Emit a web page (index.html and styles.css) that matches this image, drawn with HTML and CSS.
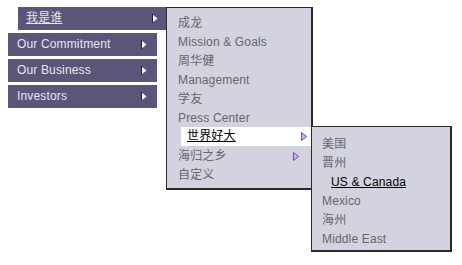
FILE: index.html
```html
<!DOCTYPE html>
<html>
<head>
<meta charset="utf-8">
<link rel="stylesheet" href="styles.css">
</head>
<body>
<nav class="menu">
  <div class="item active">
    <span class="label u">我是谁</span>
    <svg class="arr" width="6" height="9" viewBox="0 0 6 9"><polygon points="0.5,0.5 5.5,4.5 0.5,8.5" fill="#fff"/><line x1="0.5" y1="0" x2="0.5" y2="9" stroke="#1c1c5a"/></svg>
    <ul class="sub sub1">
      <li>成龙</li>
      <li>Mission &amp; Goals</li>
      <li>周华健</li>
      <li>Management</li>
      <li>学友</li>
      <li>Press Center</li>
      <li class="hot"><span class="u">世界好大</span>
        <svg class="tri" width="6" height="9" viewBox="0 0 6 9"><polygon points="0.5,0.5 5.5,4.5 0.5,8.5" fill="#c9b8f2" stroke="#7b3fd0" stroke-width="1"/></svg>
        <ul class="sub sub2">
          <li>美国</li>
          <li>晋州</li>
          <li class="sel"><span class="u">US &amp; Canada</span></li>
          <li>Mexico</li>
          <li>海州</li>
          <li>Middle East</li>
        </ul>
      </li>
      <li>海归之乡
        <svg class="tri" width="6" height="9" viewBox="0 0 6 9"><polygon points="0.5,0.5 5.5,4.5 0.5,8.5" fill="#c9b8f2" stroke="#7b3fd0" stroke-width="1"/></svg>
      </li>
      <li>自定义</li>
    </ul>
  </div>
  <div class="item">
    <span class="label">Our Commitment</span>
    <svg class="arr" width="6" height="9" viewBox="0 0 6 9"><polygon points="0.5,0.5 5.5,4.5 0.5,8.5" fill="#fff"/><line x1="0.5" y1="0" x2="0.5" y2="9" stroke="#1c1c5a"/></svg>
  </div>
  <div class="item">
    <span class="label">Our Business</span>
    <svg class="arr" width="6" height="9" viewBox="0 0 6 9"><polygon points="0.5,0.5 5.5,4.5 0.5,8.5" fill="#fff"/><line x1="0.5" y1="0" x2="0.5" y2="9" stroke="#1c1c5a"/></svg>
  </div>
  <div class="item">
    <span class="label">Investors</span>
    <svg class="arr" width="6" height="9" viewBox="0 0 6 9"><polygon points="0.5,0.5 5.5,4.5 0.5,8.5" fill="#fff"/><line x1="0.5" y1="0" x2="0.5" y2="9" stroke="#1c1c5a"/></svg>
  </div>
</nav>
</body>
</html>
```
FILE: styles.css
```css
html, body {
  margin: 0;
  padding: 0;
  background: #fff;
}
body {
  min-height: 265px;
  font-family: "Liberation Sans", "Noto Sans CJK SC", Arial, sans-serif;
  font-size: 12px;
}
.menu {
  display: flex;
  flex-direction: column;
  gap: 3px;
  padding: 7px 0 0 8px;
  min-height: 258px;
  box-sizing: border-box;
}
.item {
  position: relative;
  box-sizing: border-box;
  width: 149px;
  height: 23px;
  background: #5a5579;
  color: #e6e6f0;
  display: flex;
  align-items: center;
  justify-content: space-between;
  padding: 0 10px 0 9px;
}
.item.active {
  margin-left: 10px;
  width: 148px;
  padding: 0 8px 0 8px;
  z-index: 2;
}
.label {
  line-height: 23px;
  letter-spacing: 0.15px;
}
.u {
  text-decoration: underline;
}
.arr {
  display: block;
}
.sub {
  list-style: none;
  margin: 0;
  position: absolute;
  box-sizing: border-box;
  background: #d3d3df;
  border: 1px solid #2a2a2a;
  border-right-width: 2px;
  border-bottom-width: 2px;
  color: #666;
  z-index: 2;
  letter-spacing: 0.15px;
}
.sub1 {
  left: 148px;
  top: 0;
  width: 147px;
  height: 183px;
  padding: 6px 0 0 0;
}
.sub1 > li {
  position: relative;
  height: 19px;
  line-height: 19px;
  padding: 0 12px 0 11px;
  display: flex;
  align-items: center;
  justify-content: space-between;
  white-space: nowrap;
}
.sub1 > li.hot {
  margin-left: 14px;
  margin-top: -1px;
  margin-bottom: 1px;
  padding: 0 4px 0 6px;
  background: #fff;
  color: #000;
}
.tri {
  display: block;
}
.sub2 {
  left: 100%;
  top: -1px;
  width: 141px;
  height: 126px;
  padding: 8px 0 0 0;
  color: #666;
}
.sub2 li {
  height: 19px;
  line-height: 19px;
  padding-left: 10px;
  white-space: nowrap;
}
.sub2 li.sel {
  padding-left: 19px;
  color: #000;
}
```
